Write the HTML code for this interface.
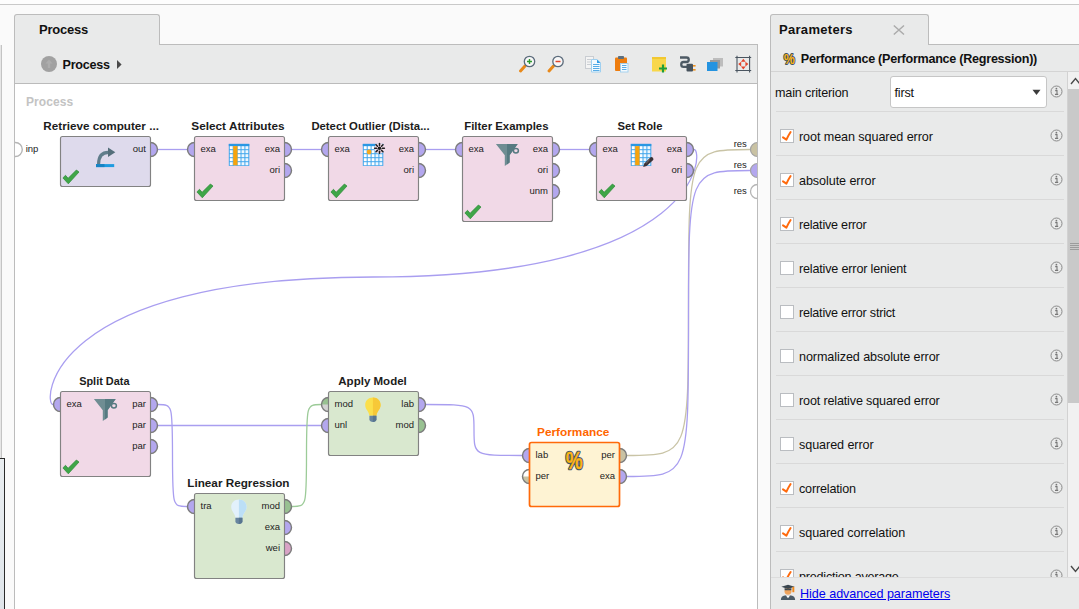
<!DOCTYPE html>
<html><head><meta charset="utf-8"><title>Process</title>
<style>
html,body{margin:0;padding:0}
body{width:1079px;height:609px;overflow:hidden;background:#fafafa;position:relative;font-family:"Liberation Sans",sans-serif;color:#1c1c1c}
.abs{position:absolute}
.ot{font-family:"Liberation Sans",sans-serif;font-weight:bold;font-size:11.3px}
.pl{font-family:"Liberation Sans",sans-serif;font-size:9.5px;fill:#222}
.tab{position:absolute;background:#e9eaea;border:1px solid #bcbcbc;border-bottom:none;border-radius:3px 3px 0 0;box-sizing:border-box;font-weight:bold;font-size:13px}
.row{position:absolute;left:5px;width:288px;height:44px;border-top:1px solid #d9d9d9;box-sizing:border-box}
.cb{position:absolute;left:4px;top:17px;width:14px;height:14px;background:#fff;border:1px solid #babdc1;box-sizing:border-box}
.cb svg{left:-1px !important;top:-1px !important}
.lbl{position:absolute;left:23px;top:18px;font-size:12.6px;line-height:15px;white-space:nowrap;color:#111}
.info{position:absolute;left:274px;top:17.3px}
</style></head><body>
<div class="abs" style="left:0;top:4px;width:1079px;height:1px;background:#c9c9c9"></div>
<div class="abs" style="left:0;top:0;width:1079px;height:4px;background:#fdfdfd"></div>

<!-- left cut-off panel -->
<div class="abs" style="left:0;top:45px;width:1px;height:564px;background:#e6e6e6"></div>
<div class="abs" style="left:1px;top:45px;width:1px;height:564px;background:#c4c4c4"></div>
<div class="abs" style="left:0;top:458px;width:5px;height:151px;background:linear-gradient(#e9edf0,#dfe5ea);border-top:1px solid #2a2a2a;border-right:1px solid #2a2a2a;box-sizing:border-box"></div>

<!-- process panel -->
<div class="tab" style="left:14px;top:14px;width:146px;height:31px"><span class="abs" style="left:24px;top:7px;font-size:13px;color:#111;letter-spacing:-0.227px">Process</span></div>
<div class="abs" style="left:14px;top:44px;width:744px;height:565px;background:#fff;border:1px solid #bcbcbc;border-bottom:none;box-sizing:border-box"></div>
<div class="abs" style="left:15px;top:45px;width:742px;height:38px;background:#e9eaea;border-bottom:1px solid #bbbbbb"></div>
<div class="abs" style="left:15px;top:44px;width:144px;height:2px;background:#e9eaea"></div>
<div class="abs" style="left:41px;top:56px;width:16px;height:16px;border-radius:8px;background:#a1a1a1"></div>
<svg class="abs" style="left:41px;top:56px" width="16" height="16" viewBox="0 0 16 16"><path d="M8,3.5 L11.5,7.5 H9.2 V12 H6.8 V7.5 H4.5 Z" fill="#adadad"/></svg>
<div class="abs" style="left:62.5px;top:58px;font-weight:bold;font-size:12.6px;line-height:15px;color:#111;letter-spacing:-0.251px">Process</div>
<svg class="abs" style="left:116px;top:59px" width="7" height="11" viewBox="0 0 7 11"><path d="M1,1 L5.6,5.5 L1,10 Z" fill="#4a4a4a"/></svg>
<div class="abs" style="left:26px;top:95px;font-weight:bold;font-size:12px;line-height:14px;color:#c3c3c3;letter-spacing:0.062px">Process</div>

<!-- toolbar icons -->
<svg class="abs" style="left:510px;top:48px" width="250" height="32" viewBox="510 48 250 32">
<g><line x1="525" y1="66" x2="520.5" y2="71" stroke="#e8891a" stroke-width="3" stroke-linecap="round"/><circle cx="529.5" cy="61.5" r="5.2" fill="#f7f7f7" stroke="#5b6b7b" stroke-width="1.3"/><path d="M527,61.5 H532 M529.5,59 V64" stroke="#2e9a2e" stroke-width="1.4"/></g>
<g><line x1="553.5" y1="66" x2="549" y2="71" stroke="#e8891a" stroke-width="3" stroke-linecap="round"/><circle cx="558" cy="61.5" r="5.2" fill="#f7f7f7" stroke="#5b6b7b" stroke-width="1.3"/><path d="M555.5,61.5 H560.5" stroke="#e0452a" stroke-width="1.5"/></g>
<g><rect x="585.5" y="56.5" width="8" height="12" fill="#f4f4f4" stroke="#c9cdd2" stroke-width="1"/><path d="M587,59.5 H592 M587,62 H592 M587,64.5 H592" stroke="#c5c9ce" stroke-width="0.9"/>
<path d="M591.5,59.5 H597 L600.5,63 V72 H591.5 Z" fill="#f4fafe" stroke="#9fd0f0" stroke-width="1"/><path d="M597,59.5 L600.5,63 H597 Z" fill="#2f9de8"/><path d="M593,64.5 H599.5 M593,66.5 H599.5 M593,68.5 H599.5 M593,70.5 H599.5" stroke="#58ace6" stroke-width="1"/></g>
<g><rect x="615" y="57.5" width="12" height="13.5" rx="1" fill="#ee7d0e"/><rect x="618" y="56" width="6" height="3" rx="0.8" fill="#5d6f7e"/><rect x="620.5" y="63.5" width="7.5" height="8.5" fill="#f4fafe" stroke="#9fd0f0" stroke-width="0.9"/><path d="M622,65.5 H626.5 M622,67.5 H626.5 M622,69.5 H626.5" stroke="#58ace6" stroke-width="1"/></g>
<g><rect x="652" y="57" width="14" height="14.5" fill="#f8d74a"/><rect x="652" y="57" width="14" height="2" fill="#f2c832"/><path d="M659,68.5 H667 M663,64.5 V72.5" stroke="#1f9e3a" stroke-width="2.2"/></g>
<g><path d="M680,57.5 H686.5 C689.5,57.5 689.5,62 686.5,62 H683.5 C680.5,62 680.5,66.8 683.5,66.8 H687" fill="none" stroke="#4d5a64" stroke-width="2.3"/><rect x="686.5" y="63.8" width="6.5" height="7.8" rx="1" fill="#46525c"/><rect x="693" y="65" width="2.6" height="1.6" fill="#f0921e"/><rect x="693" y="69" width="2.6" height="1.6" fill="#f0921e"/></g>
<g><rect x="713" y="58" width="10" height="8.5" fill="#bdbdbd"/><rect x="710" y="60" width="10" height="8.5" fill="#9a9a9a"/><rect x="707" y="62" width="10.5" height="9" fill="#2493e0"/></g>
<g><path d="M735.3,57.5 H751.2 M735.3,70.5 H751.2 M737,55.8 V72.4 M749.6,55.8 V72.4" stroke="#4a5560" stroke-width="1.1" fill="none"/>
<path d="M743.3,58.8 L745.6,61.8 H741 Z M743.3,69.4 L745.6,66.4 H741 Z M738.2,64.1 L741.2,61.8 V66.4 Z M748.4,64.1 L745.4,61.8 V66.4 Z" fill="#e5432a"/></g>
</svg>

<!-- process canvas -->
<svg class="abs" style="left:0;top:0" width="758" height="609" viewBox="0 0 758 609">
<defs><clipPath id="cv"><rect x="15" y="84" width="742.5" height="525"/></clipPath><clipPath id="cv2"><rect x="5" y="84" width="760" height="525"/></clipPath></defs>
<g clip-path="url(#cv2)">
<path d="M158,149.5L187,149.5" fill="none" stroke="#a99ef0" stroke-width="1.3"/>
<path d="M292,149.5L321,149.5" fill="none" stroke="#a99ef0" stroke-width="1.3"/>
<path d="M426,149.5L455,149.5" fill="none" stroke="#a99ef0" stroke-width="1.3"/>
<path d="M560,149.5L589,149.5" fill="none" stroke="#a99ef0" stroke-width="1.3"/>
<path d="M694,149.5C704,149.5 704,277.0 373.5,277.0C43,277.0 43,404.5 53,404.5" fill="none" stroke="#a99ef0" stroke-width="1.3"/>
<path d="M158,404.5C172.5,404.5 172.5,404.5 172.5,455.5C172.5,506.5 172.5,506.5 187,506.5" fill="none" stroke="#a99ef0" stroke-width="1.3"/>
<path d="M158,425.5L321,425.5" fill="none" stroke="#a99ef0" stroke-width="1.3"/>
<path d="M292,506.5C306.5,506.5 306.5,506.5 306.5,455.5C306.5,404.5 306.5,404.5 321,404.5" fill="none" stroke="#9ccb98" stroke-width="1.3"/>
<path d="M426,404.5C474.0,404.5 474.0,404.5 474.0,430.0C474.0,455.5 474.0,455.5 522,455.5" fill="none" stroke="#a99ef0" stroke-width="1.3"/>
<path d="M627,455.5C688.5,455.5 688.5,455.5 688.5,302.5C688.5,149.5 688.5,149.5 750,149.5" fill="none" stroke="#c9c4a6" stroke-width="1.3"/>
<path d="M627,476.5C688.5,476.5 688.5,476.5 688.5,323.5C688.5,170.5 688.5,170.5 750,170.5" fill="none" stroke="#a99ef0" stroke-width="1.3"/>
<circle cx="15.3" cy="149.5" r="7" fill="#ffffff" stroke="#b5b5b5" stroke-width="1.4"/>
<rect x="5" y="138" width="9" height="22" fill="#fafafa"/>
<rect x="14" y="141" width="1" height="17" fill="#bcbcbc"/>
<text x="25.7" y="151.7" class="pl">inp</text>
<circle cx="757.5" cy="149.5" r="7" fill="#c9c2a3" stroke="#a3a3a3" stroke-width="1.2"/>
<circle cx="757.5" cy="170.5" r="7" fill="#b3a7ee" stroke="#a3a3a3" stroke-width="1.2"/>
<circle cx="757.5" cy="191.5" r="7" fill="#ffffff" stroke="#b5b5b5" stroke-width="1.3"/>
<text x="746.5" y="146.5" text-anchor="end" class="pl" letter-spacing="-0.15">res</text>
<text x="746.5" y="167.5" text-anchor="end" class="pl" letter-spacing="-0.15">res</text>
<text x="746.5" y="193.5" text-anchor="end" class="pl" letter-spacing="-0.15">res</text>
<circle cx="150.5" cy="149.5" r="7" fill="#b3a7ee" stroke="#7c7c7c" stroke-width="1.45"/>
<rect x="60.5" y="136.5" width="90" height="50" rx="2" fill="#dedaec" stroke="#828282" stroke-width="1.15"/>
<text x="43.3" y="129.5" textLength="115.6" lengthAdjust="spacingAndGlyphs" class="ot" fill="#1c1c1c">Retrieve computer ...</text>
<text x="146" y="151.7" text-anchor="end" class="pl">out</text>
<g transform="translate(93,143)"><rect x="3" y="21.1" width="18.2" height="3" fill="#1e9be0"/><rect x="3" y="21.1" width="8.5" height="3" fill="#1783c4"/><path d="M5.6,21.1 C5.6,13.5 8.6,9.3 15.5,9.3" fill="none" stroke="#607d8b" stroke-width="3.2"/><path d="M15,4.6 L22.3,9.3 L15,14 Z" fill="#546e7a"/></g>
<path transform="translate(60,186)" d="M2.9,-8.1 L5.5,-10.7 L8.1,-7.7 L16.4,-16 L19,-14 L8.3,-2.2 Z" fill="#3fa648" stroke="#2b8a36" stroke-width="0.7" stroke-linejoin="round"/>
<circle cx="194.5" cy="149.5" r="7" fill="#b3a7ee" stroke="#7c7c7c" stroke-width="1.45"/>
<circle cx="284.5" cy="149.5" r="7" fill="#b3a7ee" stroke="#7c7c7c" stroke-width="1.45"/>
<circle cx="284.5" cy="170.5" r="7" fill="#b3a7ee" stroke="#7c7c7c" stroke-width="1.45"/>
<rect x="194.5" y="136.5" width="90" height="64" rx="2" fill="#f1d9e7" stroke="#828282" stroke-width="1.15"/>
<text x="191.3" y="129.5" textLength="93.3" lengthAdjust="spacingAndGlyphs" class="ot" fill="#1c1c1c">Select Attributes</text>
<text x="200.5" y="151.7" class="pl">exa</text>
<text x="280" y="151.7" text-anchor="end" class="pl">exa</text>
<text x="280" y="172.7" text-anchor="end" class="pl">ori</text>
<g transform="translate(227,143)"><rect x="1.8" y="0.9" width="20.5" height="22" fill="#41a6ec"/><rect x="1.8" y="0.9" width="20.5" height="2.2" fill="#2b97e3"/><rect x="2.80" y="3.20" width="2.9" height="3.0" fill="#ffffff"/><rect x="6.70" y="3.20" width="2.9" height="3.0" fill="#ffffff"/><rect x="10.60" y="3.20" width="2.9" height="3.0" fill="#ffffff"/><rect x="14.50" y="3.20" width="2.9" height="3.0" fill="#eef7fe"/><rect x="18.40" y="3.20" width="2.9" height="3.0" fill="#eef7fe"/><rect x="2.80" y="7.20" width="2.9" height="3.0" fill="#ffffff"/><rect x="6.70" y="7.20" width="2.9" height="3.0" fill="#ffffff"/><rect x="10.60" y="7.20" width="2.9" height="3.0" fill="#ffffff"/><rect x="14.50" y="7.20" width="2.9" height="3.0" fill="#eef7fe"/><rect x="18.40" y="7.20" width="2.9" height="3.0" fill="#eef7fe"/><rect x="2.80" y="11.20" width="2.9" height="3.0" fill="#ffffff"/><rect x="6.70" y="11.20" width="2.9" height="3.0" fill="#ffffff"/><rect x="10.60" y="11.20" width="2.9" height="3.0" fill="#ffffff"/><rect x="14.50" y="11.20" width="2.9" height="3.0" fill="#eef7fe"/><rect x="18.40" y="11.20" width="2.9" height="3.0" fill="#eef7fe"/><rect x="2.80" y="15.20" width="2.9" height="3.0" fill="#ffffff"/><rect x="6.70" y="15.20" width="2.9" height="3.0" fill="#ffffff"/><rect x="10.60" y="15.20" width="2.9" height="3.0" fill="#ffffff"/><rect x="14.50" y="15.20" width="2.9" height="3.0" fill="#eef7fe"/><rect x="18.40" y="15.20" width="2.9" height="3.0" fill="#eef7fe"/><rect x="2.80" y="19.20" width="2.9" height="3.0" fill="#ffffff"/><rect x="6.70" y="19.20" width="2.9" height="3.0" fill="#ffffff"/><rect x="10.60" y="19.20" width="2.9" height="3.0" fill="#ffffff"/><rect x="14.50" y="19.20" width="2.9" height="3.0" fill="#eef7fe"/><rect x="18.40" y="19.20" width="2.9" height="3.0" fill="#eef7fe"/><rect x="6.2" y="3.1" width="4.3" height="19.2" fill="#f7a30c"/></g>
<path transform="translate(194,200)" d="M2.9,-8.1 L5.5,-10.7 L8.1,-7.7 L16.4,-16 L19,-14 L8.3,-2.2 Z" fill="#3fa648" stroke="#2b8a36" stroke-width="0.7" stroke-linejoin="round"/>
<circle cx="328.5" cy="149.5" r="7" fill="#b3a7ee" stroke="#7c7c7c" stroke-width="1.45"/>
<circle cx="418.5" cy="149.5" r="7" fill="#b3a7ee" stroke="#7c7c7c" stroke-width="1.45"/>
<circle cx="418.5" cy="170.5" r="7" fill="#b3a7ee" stroke="#7c7c7c" stroke-width="1.45"/>
<rect x="328.5" y="136.5" width="90" height="64" rx="2" fill="#f1d9e7" stroke="#828282" stroke-width="1.15"/>
<text x="311.4" y="129.5" textLength="118.2" lengthAdjust="spacingAndGlyphs" class="ot" fill="#1c1c1c">Detect Outlier (Dista...</text>
<text x="334.5" y="151.7" class="pl">exa</text>
<text x="414" y="151.7" text-anchor="end" class="pl">exa</text>
<text x="414" y="172.7" text-anchor="end" class="pl">ori</text>
<g transform="translate(361,143)"><rect x="1.8" y="0.9" width="20.5" height="22" fill="#41a6ec"/><rect x="1.8" y="0.9" width="20.5" height="2.2" fill="#2b97e3"/><rect x="2.80" y="3.20" width="2.9" height="3.0" fill="#ffffff"/><rect x="6.70" y="3.20" width="2.9" height="3.0" fill="#ffffff"/><rect x="10.60" y="3.20" width="2.9" height="3.0" fill="#ffffff"/><rect x="14.50" y="3.20" width="2.9" height="3.0" fill="#eef7fe"/><rect x="18.40" y="3.20" width="2.9" height="3.0" fill="#eef7fe"/><rect x="2.80" y="7.20" width="2.9" height="3.0" fill="#ffffff"/><rect x="6.70" y="7.20" width="2.9" height="3.0" fill="#ffffff"/><rect x="10.60" y="7.20" width="2.9" height="3.0" fill="#ffffff"/><rect x="14.50" y="7.20" width="2.9" height="3.0" fill="#eef7fe"/><rect x="18.40" y="7.20" width="2.9" height="3.0" fill="#eef7fe"/><rect x="2.80" y="11.20" width="2.9" height="3.0" fill="#ffffff"/><rect x="6.70" y="11.20" width="2.9" height="3.0" fill="#ffffff"/><rect x="10.60" y="11.20" width="2.9" height="3.0" fill="#ffffff"/><rect x="14.50" y="11.20" width="2.9" height="3.0" fill="#eef7fe"/><rect x="18.40" y="11.20" width="2.9" height="3.0" fill="#eef7fe"/><rect x="2.80" y="15.20" width="2.9" height="3.0" fill="#ffffff"/><rect x="6.70" y="15.20" width="2.9" height="3.0" fill="#ffffff"/><rect x="10.60" y="15.20" width="2.9" height="3.0" fill="#ffffff"/><rect x="14.50" y="15.20" width="2.9" height="3.0" fill="#eef7fe"/><rect x="18.40" y="15.20" width="2.9" height="3.0" fill="#eef7fe"/><rect x="2.80" y="19.20" width="2.9" height="3.0" fill="#ffffff"/><rect x="6.70" y="19.20" width="2.9" height="3.0" fill="#ffffff"/><rect x="10.60" y="19.20" width="2.9" height="3.0" fill="#ffffff"/><rect x="14.50" y="19.20" width="2.9" height="3.0" fill="#eef7fe"/><rect x="18.40" y="19.20" width="2.9" height="3.0" fill="#eef7fe"/><circle cx="8.1" cy="9" r="2.4" fill="#f7a81c"/><circle cx="18.5" cy="5.3" r="5.2" fill="#f1d9e7"/><circle cx="18.5" cy="5.3" r="1.8" fill="#1e1e1e"/><line x1="21.40" y1="5.30" x2="23.40" y2="5.30" stroke="#1e1e1e" stroke-width="1.5" stroke-linecap="round"/><line x1="20.55" y1="7.35" x2="21.96" y2="8.76" stroke="#1e1e1e" stroke-width="1.5" stroke-linecap="round"/><line x1="18.50" y1="8.20" x2="18.50" y2="10.20" stroke="#1e1e1e" stroke-width="1.5" stroke-linecap="round"/><line x1="16.45" y1="7.35" x2="15.04" y2="8.76" stroke="#1e1e1e" stroke-width="1.5" stroke-linecap="round"/><line x1="15.60" y1="5.30" x2="13.60" y2="5.30" stroke="#1e1e1e" stroke-width="1.5" stroke-linecap="round"/><line x1="16.45" y1="3.25" x2="15.04" y2="1.84" stroke="#1e1e1e" stroke-width="1.5" stroke-linecap="round"/><line x1="18.50" y1="2.40" x2="18.50" y2="0.40" stroke="#1e1e1e" stroke-width="1.5" stroke-linecap="round"/><line x1="20.55" y1="3.25" x2="21.96" y2="1.84" stroke="#1e1e1e" stroke-width="1.5" stroke-linecap="round"/></g>
<path transform="translate(328,200)" d="M2.9,-8.1 L5.5,-10.7 L8.1,-7.7 L16.4,-16 L19,-14 L8.3,-2.2 Z" fill="#3fa648" stroke="#2b8a36" stroke-width="0.7" stroke-linejoin="round"/>
<circle cx="462.5" cy="149.5" r="7" fill="#b3a7ee" stroke="#7c7c7c" stroke-width="1.45"/>
<circle cx="552.5" cy="149.5" r="7" fill="#b3a7ee" stroke="#7c7c7c" stroke-width="1.45"/>
<circle cx="552.5" cy="170.5" r="7" fill="#b3a7ee" stroke="#7c7c7c" stroke-width="1.45"/>
<circle cx="552.5" cy="191.5" r="7" fill="#b3a7ee" stroke="#7c7c7c" stroke-width="1.45"/>
<rect x="462.5" y="136.5" width="90" height="85" rx="2" fill="#f1d9e7" stroke="#828282" stroke-width="1.15"/>
<text x="464.2" y="129.5" textLength="84.3" lengthAdjust="spacingAndGlyphs" class="ot" fill="#1c1c1c">Filter Examples</text>
<text x="468.5" y="151.7" class="pl">exa</text>
<text x="548" y="151.7" text-anchor="end" class="pl">exa</text>
<text x="548" y="172.7" text-anchor="end" class="pl">ori</text>
<text x="548" y="193.7" text-anchor="end" class="pl">unm</text>
<g transform="translate(495,143)"><path d="M0.9,1.1 L22.7,1.1 L14.6,12.3 L14.6,19.6 L9.8,22.9 L9.8,12.3 Z" fill="#6f8d93"/><path d="M12,1.1 L22.7,1.1 L14.6,12.3 L14.6,19.6 L12,21.4 Z" fill="#567a81"/><ellipse cx="20.9" cy="7.8" rx="2.5" ry="2.2" fill="none" stroke="#567a81" stroke-width="1.5"/></g>
<path transform="translate(462,221)" d="M2.9,-8.1 L5.5,-10.7 L8.1,-7.7 L16.4,-16 L19,-14 L8.3,-2.2 Z" fill="#3fa648" stroke="#2b8a36" stroke-width="0.7" stroke-linejoin="round"/>
<circle cx="596.5" cy="149.5" r="7" fill="#b3a7ee" stroke="#7c7c7c" stroke-width="1.45"/>
<circle cx="686.5" cy="149.5" r="7" fill="#b3a7ee" stroke="#7c7c7c" stroke-width="1.45"/>
<circle cx="686.5" cy="170.5" r="7" fill="#b3a7ee" stroke="#7c7c7c" stroke-width="1.45"/>
<rect x="596.5" y="136.5" width="90" height="64" rx="2" fill="#f1d9e7" stroke="#828282" stroke-width="1.15"/>
<text x="617.4" y="129.5" textLength="45.1" lengthAdjust="spacingAndGlyphs" class="ot" fill="#1c1c1c">Set Role</text>
<text x="602.5" y="151.7" class="pl">exa</text>
<text x="682" y="151.7" text-anchor="end" class="pl">exa</text>
<text x="682" y="172.7" text-anchor="end" class="pl">ori</text>
<g transform="translate(629,143)"><rect x="1.8" y="0.9" width="20.5" height="22" fill="#41a6ec"/><rect x="1.8" y="0.9" width="20.5" height="2.2" fill="#2b97e3"/><rect x="2.80" y="3.20" width="2.9" height="3.0" fill="#ffffff"/><rect x="6.70" y="3.20" width="2.9" height="3.0" fill="#ffffff"/><rect x="10.60" y="3.20" width="2.9" height="3.0" fill="#ffffff"/><rect x="14.50" y="3.20" width="2.9" height="3.0" fill="#eef7fe"/><rect x="18.40" y="3.20" width="2.9" height="3.0" fill="#eef7fe"/><rect x="2.80" y="7.20" width="2.9" height="3.0" fill="#ffffff"/><rect x="6.70" y="7.20" width="2.9" height="3.0" fill="#ffffff"/><rect x="10.60" y="7.20" width="2.9" height="3.0" fill="#ffffff"/><rect x="14.50" y="7.20" width="2.9" height="3.0" fill="#eef7fe"/><rect x="18.40" y="7.20" width="2.9" height="3.0" fill="#eef7fe"/><rect x="2.80" y="11.20" width="2.9" height="3.0" fill="#ffffff"/><rect x="6.70" y="11.20" width="2.9" height="3.0" fill="#ffffff"/><rect x="10.60" y="11.20" width="2.9" height="3.0" fill="#ffffff"/><rect x="14.50" y="11.20" width="2.9" height="3.0" fill="#eef7fe"/><rect x="18.40" y="11.20" width="2.9" height="3.0" fill="#eef7fe"/><rect x="2.80" y="15.20" width="2.9" height="3.0" fill="#ffffff"/><rect x="6.70" y="15.20" width="2.9" height="3.0" fill="#ffffff"/><rect x="10.60" y="15.20" width="2.9" height="3.0" fill="#ffffff"/><rect x="14.50" y="15.20" width="2.9" height="3.0" fill="#eef7fe"/><rect x="18.40" y="15.20" width="2.9" height="3.0" fill="#eef7fe"/><rect x="2.80" y="19.20" width="2.9" height="3.0" fill="#ffffff"/><rect x="6.70" y="19.20" width="2.9" height="3.0" fill="#ffffff"/><rect x="10.60" y="19.20" width="2.9" height="3.0" fill="#ffffff"/><rect x="14.50" y="19.20" width="2.9" height="3.0" fill="#eef7fe"/><rect x="18.40" y="19.20" width="2.9" height="3.0" fill="#eef7fe"/><rect x="6.2" y="3.1" width="4.3" height="19.2" fill="#f7a30c"/><path d="M14.2,23.9 L15.3,20.6 L21.6,14.3 Q22.8,13.6 23.9,14.7 Q24.9,15.9 24.2,16.9 L17.6,23.0 Z" fill="#3b3338"/><path d="M17.2,20.2 L20.6,16.8" stroke="#8a8488" stroke-width="0.8" fill="none"/></g>
<path transform="translate(596,200)" d="M2.9,-8.1 L5.5,-10.7 L8.1,-7.7 L16.4,-16 L19,-14 L8.3,-2.2 Z" fill="#3fa648" stroke="#2b8a36" stroke-width="0.7" stroke-linejoin="round"/>
<circle cx="60.5" cy="404.5" r="7" fill="#b3a7ee" stroke="#7c7c7c" stroke-width="1.45"/>
<circle cx="150.5" cy="404.5" r="7" fill="#b3a7ee" stroke="#7c7c7c" stroke-width="1.45"/>
<circle cx="150.5" cy="425.5" r="7" fill="#b3a7ee" stroke="#7c7c7c" stroke-width="1.45"/>
<circle cx="150.5" cy="446.5" r="7" fill="#b3a7ee" stroke="#7c7c7c" stroke-width="1.45"/>
<rect x="60.5" y="391.5" width="90" height="85" rx="2" fill="#f1d9e7" stroke="#828282" stroke-width="1.15"/>
<text x="79.2" y="384.5" textLength="50.3" lengthAdjust="spacingAndGlyphs" class="ot" fill="#1c1c1c">Split Data</text>
<text x="66.5" y="406.7" class="pl">exa</text>
<text x="146" y="406.7" text-anchor="end" class="pl">par</text>
<text x="146" y="427.7" text-anchor="end" class="pl">par</text>
<text x="146" y="448.7" text-anchor="end" class="pl">par</text>
<g transform="translate(93,398)"><path d="M0.9,1.1 L22.7,1.1 L14.6,12.3 L14.6,19.6 L9.8,22.9 L9.8,12.3 Z" fill="#6f8d93"/><path d="M12,1.1 L22.7,1.1 L14.6,12.3 L14.6,19.6 L12,21.4 Z" fill="#567a81"/><ellipse cx="20.9" cy="7.8" rx="2.5" ry="2.2" fill="none" stroke="#567a81" stroke-width="1.5"/></g>
<path transform="translate(60,476)" d="M2.9,-8.1 L5.5,-10.7 L8.1,-7.7 L16.4,-16 L19,-14 L8.3,-2.2 Z" fill="#3fa648" stroke="#2b8a36" stroke-width="0.7" stroke-linejoin="round"/>
<circle cx="194.5" cy="506.5" r="7" fill="#b3a7ee" stroke="#7c7c7c" stroke-width="1.45"/>
<circle cx="284.5" cy="506.5" r="7" fill="#98c191" stroke="#7c7c7c" stroke-width="1.45"/>
<circle cx="284.5" cy="527.5" r="7" fill="#b3a7ee" stroke="#7c7c7c" stroke-width="1.45"/>
<circle cx="284.5" cy="548.5" r="7" fill="#d9a3c6" stroke="#7c7c7c" stroke-width="1.45"/>
<rect x="194.5" y="493.5" width="90" height="85" rx="2" fill="#d9e8cf" stroke="#828282" stroke-width="1.15"/>
<text x="187.3" y="486.5" textLength="102.2" lengthAdjust="spacingAndGlyphs" class="ot" fill="#1c1c1c">Linear Regression</text>
<text x="200.5" y="508.7" class="pl">tra</text>
<text x="280" y="508.7" text-anchor="end" class="pl">mod</text>
<text x="280" y="529.7" text-anchor="end" class="pl">exa</text>
<text x="280" y="550.7" text-anchor="end" class="pl">wei</text>
<g transform="translate(227,500)"><path d="M11.9,-0.4 C7.2,-0.4 4.2,3 4.2,7 C4.2,11.5 8,13 8.4,17.8 L15.4,17.8 C15.8,13 19.6,11.5 19.6,7 C19.6,3 16.6,-0.4 11.9,-0.4 Z" fill="#e2f1fb"/><path d="M11.9,-0.4 C16.6,-0.4 19.6,3 19.6,7 C19.6,11.5 15.8,13 15.4,17.8 L11.9,17.8 Z" fill="#bcdff6"/><path d="M8.4,17.8 H15.4 V21.5 C15.4,23 13.9,23.9 11.9,23.9 C9.9,23.9 8.4,23 8.4,21.5 Z" fill="#6885a0"/><path d="M11.9,17.8 H15.4 V21.5 C15.4,23 13.9,23.9 11.9,23.9 Z" fill="#587590"/></g>
<circle cx="328.5" cy="404.5" r="7" fill="#d2d2d2"/>
<path d="M321.5,404.5A7,7 0 0 1 335.5,404.5Z" fill="#98c191"/>
<circle cx="328.5" cy="404.5" r="7" fill="none" stroke="#7c7c7c" stroke-width="1.45"/>
<circle cx="328.5" cy="425.5" r="7" fill="#b3a7ee" stroke="#7c7c7c" stroke-width="1.45"/>
<circle cx="418.5" cy="404.5" r="7" fill="#b3a7ee" stroke="#7c7c7c" stroke-width="1.45"/>
<circle cx="418.5" cy="425.5" r="7" fill="#98c191" stroke="#7c7c7c" stroke-width="1.45"/>
<rect x="328.5" y="391.5" width="90" height="64" rx="2" fill="#d9e8cf" stroke="#828282" stroke-width="1.15"/>
<text x="338.3" y="384.5" textLength="68.5" lengthAdjust="spacingAndGlyphs" class="ot" fill="#1c1c1c">Apply Model</text>
<text x="334.5" y="406.7" class="pl">mod</text>
<text x="334.5" y="427.7" class="pl">unl</text>
<text x="414" y="406.7" text-anchor="end" class="pl">lab</text>
<text x="414" y="427.7" text-anchor="end" class="pl">mod</text>
<g transform="translate(361,398)"><path d="M11.9,-0.4 C7.2,-0.4 4.2,3 4.2,7 C4.2,11.5 8,13 8.4,17.8 L15.4,17.8 C15.8,13 19.6,11.5 19.6,7 C19.6,3 16.6,-0.4 11.9,-0.4 Z" fill="#fbdf4b"/><path d="M11.9,-0.4 C16.6,-0.4 19.6,3 19.6,7 C19.6,11.5 15.8,13 15.4,17.8 L11.9,17.8 Z" fill="#f7c838"/><path d="M8.4,17.8 H15.4 V21.5 C15.4,23 13.9,23.9 11.9,23.9 C9.9,23.9 8.4,23 8.4,21.5 Z" fill="#6885a0"/><path d="M11.9,17.8 H15.4 V21.5 C15.4,23 13.9,23.9 11.9,23.9 Z" fill="#587590"/></g>
<circle cx="529.5" cy="455.5" r="7" fill="#b3a7ee" stroke="#7c7c7c" stroke-width="1.45"/>
<circle cx="529.5" cy="476.5" r="7" fill="#c9c2a3"/>
<path d="M522.5,476.5A7,7 0 0 1 536.5,476.5Z" fill="#ffffff"/>
<circle cx="529.5" cy="476.5" r="7" fill="none" stroke="#7c7c7c" stroke-width="1.45"/>
<circle cx="619.5" cy="455.5" r="7" fill="#c9c2a3" stroke="#7c7c7c" stroke-width="1.45"/>
<circle cx="619.5" cy="476.5" r="7" fill="#b3a7ee" stroke="#7c7c7c" stroke-width="1.45"/>
<rect x="529.5" y="442.5" width="90" height="64" rx="2" fill="#fef3d3" stroke="#ff6a0a" stroke-width="1.7"/>
<text x="537.0" y="435.5" textLength="72.4" lengthAdjust="spacingAndGlyphs" class="ot" fill="#ff6600">Performance</text>
<text x="535.5" y="457.7" class="pl">lab</text>
<text x="535.5" y="478.7" class="pl">per</text>
<text x="615" y="457.7" text-anchor="end" class="pl">per</text>
<text x="615" y="478.7" text-anchor="end" class="pl">exa</text>
<g transform="translate(562,449)"><text transform="translate(12.2,20.3) scale(0.83,1)" x="0" y="0" text-anchor="middle" font-family="Liberation Sans, sans-serif" font-weight="bold" font-size="23" fill="#3f566a" stroke="#3f566a" stroke-width="2.6" stroke-linejoin="round">%</text><text transform="translate(12.2,20.3) scale(0.83,1)" x="0" y="0" text-anchor="middle" font-family="Liberation Sans, sans-serif" font-weight="bold" font-size="23" fill="#fdb414" stroke="#fdb414" stroke-width="0.3">%</text></g>
</g>
</svg>
<div class="abs" style="left:758px;top:100px;width:12px;height:120px;background:#fafafa"></div>
<div class="abs" style="left:757px;top:44px;width:1px;height:565px;background:#bcbcbc"></div>

<!-- parameters panel -->
<div class="tab" style="left:770px;top:14px;width:159px;height:31px"><span class="abs" style="left:8px;top:7px;font-size:13px;color:#111;letter-spacing:0.3px">Parameters</span>
<svg class="abs" style="left:121px;top:9px" width="14" height="12" viewBox="0 0 14 12"><path d="M1.8,1.5 L12,10.5 M12,1.5 L1.8,10.5" stroke="#ababab" stroke-width="1.5"/></svg></div>
<div class="abs" style="left:770px;top:44px;width:309px;height:565px;background:#e9eaea;border-top:1px solid #bcbcbc;border-left:1px solid #bcbcbc;box-sizing:border-box"></div>
<div class="abs" style="left:771px;top:44px;width:157px;height:2px;background:#e9eaea"></div>
<div class="abs" style="left:771px;top:71px;width:308px;height:1px;background:#d4d4d4"></div>
<svg class="abs" style="left:781px;top:49px" width="17" height="18" viewBox="0 0 17 18"><text transform="translate(8.4,14.6) scale(0.86,1)" text-anchor="middle" font-family="Liberation Sans, sans-serif" font-weight="bold" font-size="14.5" fill="#3f566a" stroke="#3f566a" stroke-width="2" stroke-linejoin="round">%</text><text transform="translate(8.4,14.6) scale(0.86,1)" text-anchor="middle" font-family="Liberation Sans, sans-serif" font-weight="bold" font-size="14.5" fill="#fdb414">%</text></svg>
<div class="abs" style="left:800.8px;top:52px;font-weight:bold;font-size:12.6px;line-height:15px;white-space:nowrap;color:#111;letter-spacing:-0.266px">Performance (Performance (Regression))</div>

<div class="abs" style="left:771px;top:72px;width:296px;height:505px;overflow:hidden">
  <div class="abs" style="left:4px;top:14px;font-size:12.6px;line-height:15px;white-space:nowrap;color:#111;letter-spacing:-0.153px">main criterion</div>
  <div class="abs" style="left:119px;top:4px;width:157px;height:32px;background:#fff;border:1px solid #c6c6c6;border-radius:3px;box-sizing:border-box"><span class="abs" style="left:3.5px;top:9px;font-size:12.6px;line-height:15px;color:#111;letter-spacing:-0.172px">first</span>
  <svg class="abs" style="left:141px;top:12px" width="9" height="7" viewBox="0 0 9 7"><path d="M0.5,0.8 H8.5 L4.5,6 Z" fill="#3c3c3c"/></svg></div>
  <svg class="info" style="left:279px;top:13px" width="13" height="13" viewBox="0 0 13 13"><circle cx="6.5" cy="6.5" r="5.5" fill="none" stroke="#8a8a8a" stroke-width="1"/><circle cx="6.4" cy="3.7" r="0.9" fill="#777"/><path d="M5.2,5.6 H7 V9.3 H8 M5,9.4 H8.2" fill="none" stroke="#777" stroke-width="1.1"/></svg>
  <div class="abs" style="left:0;top:-72px;width:296px;height:600px">
<div class="row" style="top:111px"><div class="cb"><svg width="14" height="14" viewBox="0 0 14 14" style="position:absolute;left:0;top:0"><path d="M3,8.4 L6.4,10.7 Q8.2,6.6 10.6,3" fill="none" stroke="#ff6a0d" stroke-width="2" stroke-linecap="round" stroke-linejoin="round"/></svg></div><span class="lbl" style="letter-spacing:-0.087px">root mean squared error</span><svg class="info" width="13" height="13" viewBox="0 0 13 13"><circle cx="6.5" cy="6.5" r="5.5" fill="none" stroke="#8a8a8a" stroke-width="1"/><circle cx="6.4" cy="3.7" r="0.9" fill="#777"/><path d="M5.2,5.6 H7 V9.3 H8 M5,9.4 H8.2" fill="none" stroke="#777" stroke-width="1.1"/></svg></div>
<div class="row" style="top:155px"><div class="cb"><svg width="14" height="14" viewBox="0 0 14 14" style="position:absolute;left:0;top:0"><path d="M3,8.4 L6.4,10.7 Q8.2,6.6 10.6,3" fill="none" stroke="#ff6a0d" stroke-width="2" stroke-linecap="round" stroke-linejoin="round"/></svg></div><span class="lbl" style="letter-spacing:-0.078px">absolute error</span><svg class="info" width="13" height="13" viewBox="0 0 13 13"><circle cx="6.5" cy="6.5" r="5.5" fill="none" stroke="#8a8a8a" stroke-width="1"/><circle cx="6.4" cy="3.7" r="0.9" fill="#777"/><path d="M5.2,5.6 H7 V9.3 H8 M5,9.4 H8.2" fill="none" stroke="#777" stroke-width="1.1"/></svg></div>
<div class="row" style="top:199px"><div class="cb"><svg width="14" height="14" viewBox="0 0 14 14" style="position:absolute;left:0;top:0"><path d="M3,8.4 L6.4,10.7 Q8.2,6.6 10.6,3" fill="none" stroke="#ff6a0d" stroke-width="2" stroke-linecap="round" stroke-linejoin="round"/></svg></div><span class="lbl" style="letter-spacing:-0.222px">relative error</span><svg class="info" width="13" height="13" viewBox="0 0 13 13"><circle cx="6.5" cy="6.5" r="5.5" fill="none" stroke="#8a8a8a" stroke-width="1"/><circle cx="6.4" cy="3.7" r="0.9" fill="#777"/><path d="M5.2,5.6 H7 V9.3 H8 M5,9.4 H8.2" fill="none" stroke="#777" stroke-width="1.1"/></svg></div>
<div class="row" style="top:243px"><div class="cb"></div><span class="lbl" style="letter-spacing:-0.176px">relative error lenient</span><svg class="info" width="13" height="13" viewBox="0 0 13 13"><circle cx="6.5" cy="6.5" r="5.5" fill="none" stroke="#8a8a8a" stroke-width="1"/><circle cx="6.4" cy="3.7" r="0.9" fill="#777"/><path d="M5.2,5.6 H7 V9.3 H8 M5,9.4 H8.2" fill="none" stroke="#777" stroke-width="1.1"/></svg></div>
<div class="row" style="top:287px"><div class="cb"></div><span class="lbl" style="letter-spacing:-0.223px">relative error strict</span><svg class="info" width="13" height="13" viewBox="0 0 13 13"><circle cx="6.5" cy="6.5" r="5.5" fill="none" stroke="#8a8a8a" stroke-width="1"/><circle cx="6.4" cy="3.7" r="0.9" fill="#777"/><path d="M5.2,5.6 H7 V9.3 H8 M5,9.4 H8.2" fill="none" stroke="#777" stroke-width="1.1"/></svg></div>
<div class="row" style="top:331px"><div class="cb"></div><span class="lbl" style="letter-spacing:-0.084px">normalized absolute error</span><svg class="info" width="13" height="13" viewBox="0 0 13 13"><circle cx="6.5" cy="6.5" r="5.5" fill="none" stroke="#8a8a8a" stroke-width="1"/><circle cx="6.4" cy="3.7" r="0.9" fill="#777"/><path d="M5.2,5.6 H7 V9.3 H8 M5,9.4 H8.2" fill="none" stroke="#777" stroke-width="1.1"/></svg></div>
<div class="row" style="top:375px"><div class="cb"></div><span class="lbl" style="letter-spacing:-0.158px">root relative squared error</span><svg class="info" width="13" height="13" viewBox="0 0 13 13"><circle cx="6.5" cy="6.5" r="5.5" fill="none" stroke="#8a8a8a" stroke-width="1"/><circle cx="6.4" cy="3.7" r="0.9" fill="#777"/><path d="M5.2,5.6 H7 V9.3 H8 M5,9.4 H8.2" fill="none" stroke="#777" stroke-width="1.1"/></svg></div>
<div class="row" style="top:419px"><div class="cb"></div><span class="lbl" style="letter-spacing:-0.075px">squared error</span><svg class="info" width="13" height="13" viewBox="0 0 13 13"><circle cx="6.5" cy="6.5" r="5.5" fill="none" stroke="#8a8a8a" stroke-width="1"/><circle cx="6.4" cy="3.7" r="0.9" fill="#777"/><path d="M5.2,5.6 H7 V9.3 H8 M5,9.4 H8.2" fill="none" stroke="#777" stroke-width="1.1"/></svg></div>
<div class="row" style="top:463px"><div class="cb"><svg width="14" height="14" viewBox="0 0 14 14" style="position:absolute;left:0;top:0"><path d="M3,8.4 L6.4,10.7 Q8.2,6.6 10.6,3" fill="none" stroke="#ff6a0d" stroke-width="2" stroke-linecap="round" stroke-linejoin="round"/></svg></div><span class="lbl" style="letter-spacing:-0.18px">correlation</span><svg class="info" width="13" height="13" viewBox="0 0 13 13"><circle cx="6.5" cy="6.5" r="5.5" fill="none" stroke="#8a8a8a" stroke-width="1"/><circle cx="6.4" cy="3.7" r="0.9" fill="#777"/><path d="M5.2,5.6 H7 V9.3 H8 M5,9.4 H8.2" fill="none" stroke="#777" stroke-width="1.1"/></svg></div>
<div class="row" style="top:507px"><div class="cb"><svg width="14" height="14" viewBox="0 0 14 14" style="position:absolute;left:0;top:0"><path d="M3,8.4 L6.4,10.7 Q8.2,6.6 10.6,3" fill="none" stroke="#ff6a0d" stroke-width="2" stroke-linecap="round" stroke-linejoin="round"/></svg></div><span class="lbl" style="letter-spacing:-0.084px">squared correlation</span><svg class="info" width="13" height="13" viewBox="0 0 13 13"><circle cx="6.5" cy="6.5" r="5.5" fill="none" stroke="#8a8a8a" stroke-width="1"/><circle cx="6.4" cy="3.7" r="0.9" fill="#777"/><path d="M5.2,5.6 H7 V9.3 H8 M5,9.4 H8.2" fill="none" stroke="#777" stroke-width="1.1"/></svg></div>
<div class="row" style="top:551px"><div class="cb"><svg width="14" height="14" viewBox="0 0 14 14" style="position:absolute;left:0;top:0"><path d="M3,8.4 L6.4,10.7 Q8.2,6.6 10.6,3" fill="none" stroke="#ff6a0d" stroke-width="2" stroke-linecap="round" stroke-linejoin="round"/></svg></div><span class="lbl" style="letter-spacing:-0.224px">prediction average</span><svg class="info" width="13" height="13" viewBox="0 0 13 13"><circle cx="6.5" cy="6.5" r="5.5" fill="none" stroke="#8a8a8a" stroke-width="1"/><circle cx="6.4" cy="3.7" r="0.9" fill="#777"/><path d="M5.2,5.6 H7 V9.3 H8 M5,9.4 H8.2" fill="none" stroke="#777" stroke-width="1.1"/></svg></div>
  </div>
</div>
<!-- scrollbar -->
<div class="abs" style="left:1067px;top:72px;width:12px;height:505px;background:#f1f1f1;border-left:1px solid #d2d2d2;box-sizing:border-box"></div>
<div class="abs" style="left:1068px;top:89px;width:11px;height:314px;background:#c9c9c9"></div>
<svg class="abs" style="left:1068px;top:76px" width="11" height="10" viewBox="0 0 11 10"><path d="M3,8 L7.5,2.6 L12,8" fill="none" stroke="#4a4a4a" stroke-width="1.4"/></svg>
<svg class="abs" style="left:1068px;top:564px" width="11" height="10" viewBox="0 0 11 10"><path d="M3,2 L7.5,7.4 L12,2" fill="none" stroke="#4a4a4a" stroke-width="1.4"/></svg>
<div class="abs" style="left:1070px;top:243px;width:9px;height:1px;background:#9c9c9c;box-shadow:0 2px 0 #9c9c9c,0 4px 0 #9c9c9c,0 6px 0 #9c9c9c"></div>
<!-- bottom link -->
<div class="abs" style="left:771px;top:577px;width:308px;height:32px;background:#e9eaea;border-top:1px solid #dcdcdc;box-sizing:border-box"></div>
<svg class="abs" style="left:780px;top:583.8px" width="16" height="17" viewBox="0 0 18 19" preserveAspectRatio="none"><path d="M1,18 C1,13.5 4,12.5 9,12.5 C14,12.5 17,13.5 17,18 Z" fill="#4a5a66"/><path d="M6.5,12.5 L9,16 L11.5,12.5 Z" fill="#fff"/><circle cx="9" cy="8" r="3.9" fill="#eea45e"/><path d="M1.5,3.2 L9,0.8 L16.5,3.2 L9,5.6 Z" fill="#3a464f"/><path d="M5.2,4.5 V7 H12.8 V4.5 L9,5.8 Z" fill="#3a464f"/><path d="M15,3.2 V9.2" stroke="#f0881a" stroke-width="2.2"/></svg>
<div class="abs" style="left:800px;top:587px;font-size:12.6px;line-height:15px;color:#0000ee;text-decoration:underline;white-space:nowrap;letter-spacing:-0.044px">Hide advanced parameters</div>
</body></html>
